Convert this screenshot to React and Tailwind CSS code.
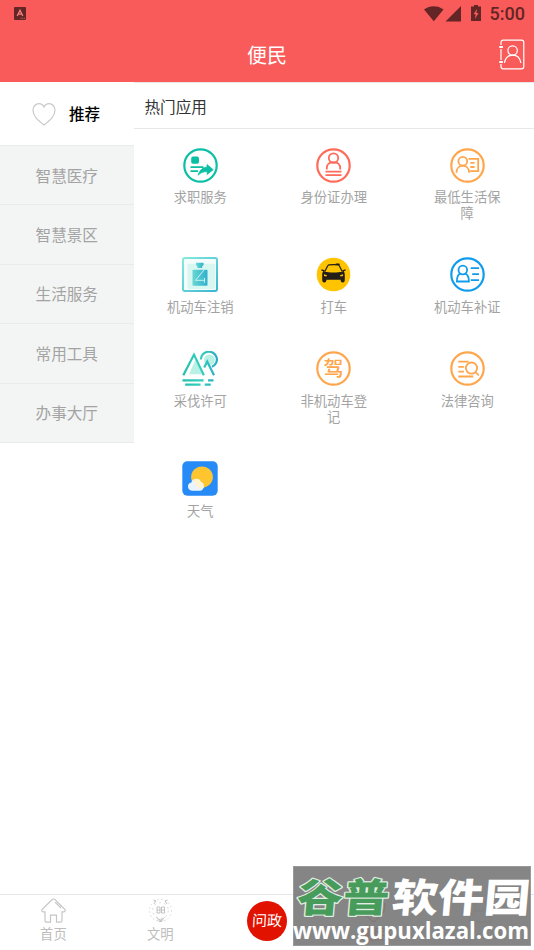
import { useState } from "react";

const categories = ["智慧医疗", "智慧景区", "生活服务", "常用工具", "办事大厅"];

const Ring = ({ color, children }) => (
    <svg viewBox="0 0 35 35" className="h-[35px] w-[35px]" fill="none" stroke={color} strokeWidth="1.8">
        <circle cx="17.5" cy="17.5" r="16.2" strokeWidth="2.2" />
        {children}
    </svg>
);

const JobIcon = () => (
    <Ring color="#0bbfa5">
        <rect x="8.2" y="8.6" width="7.8" height="7.2" rx="1.8" fill="#0bbfa5" stroke="none" />
        <path d="M7.5 19.1h13M7.5 23.1h7.6" />
        <path d="M15 27.2c2-5.7 5.2-8 9-8V16.500l6.2 5.200-6 4.700v-2.800c-4 0-6 .8-9.200 3.600z" fill="#0bbfa5" stroke="#0bbfa5" strokeWidth=".8" />
    </Ring>
);

const IdCardIcon = () => (
    <Ring color="#ff6a5a">
        <circle cx="17.5" cy="10" r="4.7" />
        <path d="M10.8 21.4v-1.3c0-3.4 2.2-5.6 5-5.6h3.4c2.8 0 5 2.2 5 5.6v1.3" />
        <path d="M9.5 23.6h16M9.5 27.2h16" />
    </Ring>
);

const WelfareIcon = () => (
    <Ring color="#ffa64d">
        <circle cx="12.8" cy="13.3" r="4.4" />
        <path d="M6.5 24.8c0-4.6 2.800-7.100 6.300-7.100s6.300 2.500 6.300 7.100M18.5 10.8h9.7v12.4h-8M20.3 14.8h4.3M20.3 19h4.3" />
    </Ring>
);

const DeregisterIcon = () => (
    <svg viewBox="0 0 36 36" className="h-[35px] w-[36px]" preserveAspectRatio="none">
        <defs>
            <linearGradient id="frame" x1="0" y1="0" x2="1" y2="1">
                <stop offset="0" stopColor="#86eadb" />
                <stop offset="1" stopColor="#3cb5d2" />
            </linearGradient>
            <linearGradient id="can" x1="0" y1="0" x2="1" y2="0">
                <stop offset="0" stopColor="#68d8d2" />
                <stop offset="1" stopColor="#2fb0cf" />
            </linearGradient>
        </defs>
        <rect x="1" y="1" width="34" height="34" rx="2" fill="#f3fdfb" stroke="url(#frame)" strokeWidth="2" />
        <rect x="5.5" y="7" width="27.5" height="26" rx="1" fill="#d8f7f1" />
        <path d="M14 6h7.5v2.6l-1.3.6v2.2h-4.8V9.2L14 8.6z" fill="url(#can)" />
        <rect x="10.5" y="13" width="15" height="16.5" rx="1" fill="url(#can)" />
        <path d="M22.3 13L13.500 24h9M22.500 21.500v5" fill="none" stroke="#d8f7f1" strokeWidth=".9" />
    </svg>
);

const TaxiIcon = () => (
    <svg viewBox="0 0 35 35" className="h-[35px] w-[35px]">
        <circle cx="17.5" cy="17.5" r="16.8" fill="#ffc400" />
        <path d="M19.500 8V7q0-.6.6-.6h3q.6 0 .6.600V8z" fill="#231e18" />
        <path d="M8.800 14.500l2.800-5.600Q12 8 13 7.900q4.500-.5 9 0 1 .1 1.400 1l2.800 5.600" fill="none" stroke="#231e18" strokeWidth="1.200" />
        <path d="M5.500 12.300l3.300.9-.4 1.600c5 .9 13.200.9 18.200 0l-.4-1.600 3.300-.9.200 1.100-2 .8c.8 1 1.100 2.300 1.100 3.800v4.500c0 1.900-.5 3-2 3s-2.200-1-2.200-2.800H10.400c0 1.800-.7 2.800-2.200 2.800s-2-1.100-2-3V18c0-1.500.3-2.800 1.100-3.800l-2-.8z" fill="#231e18" />
        <path d="M8 17.200l3 1.100-.6 1.200-2.400-.5zM27 17.200l-3 1.100.6 1.200 2.400-.5z" fill="#ffc400" />
    </svg>
);

const ReissueIcon = () => (
    <Ring color="#109cec">
        <circle cx="12.8" cy="13" r="4.3" />
        <path d="M10.3 16.7c-2.3.9-3.4 3.4-3.4 7.8h12c0-4.4-1.200-6.900-3.600-7.800M20.700 11.100H29M22.200 17.100H29M20.700 23.100H29" />
    </Ring>
);

const LoggingIcon = () => (
    <svg viewBox="0 0 36 36" className="h-[35px] w-[36px]" preserveAspectRatio="none" fill="none" stroke="url(#forest)" strokeWidth="2.200">
        <defs>
            <linearGradient id="forest" gradientUnits="userSpaceOnUse" x1="0" y1="0" x2="36" y2="0">
                <stop offset="0" stopColor="#1ebfac" />
                <stop offset=".5" stopColor="#35cfbd" />
                <stop offset="1" stopColor="#2ba9c5" />
            </linearGradient>
        </defs>
        <path d="M7 24L13.5 9 20 24z" fill="#baf1e6" stroke="none" />
        <circle cx="27.5" cy="9" r="5.5" fill="#baf1e6" stroke="none" />
        <path d="M1.3 25L12 3.700 21.800 25M18.900 8.700a8 8 0 1 1 11 7.400M22.200 17l3-6.200L32 25" />
        <path d="M.5 30.250h21M26 30.200h5.500M3.200 34.650h15.300M22.700 34.600h6" />
    </svg>
);

const DriveIcon = () => (
    <Ring color="#ffa64d">
        <text x="17.5" y="24.500" textAnchor="middle" fontSize="20" fontWeight="500" fill="#ffa64d" stroke="none">驾</text>
    </Ring>
);

const LawIcon = () => (
    <Ring color="#ffa64d">
        <circle cx="21.5" cy="17.1" r="5.6" />
        <path d="M25.6 21l3.2 3.5M8.3 10.7h10.3M8.3 15.8h5.6M8.3 20.7h5.6M8.3 25.5h15" />
    </Ring>
);

const WeatherIcon = () => (
    <svg viewBox="0 0 36 36" className="h-[35px] w-[36px]" preserveAspectRatio="none">
        <rect x=".3" y=".3" width="35.4" height="35.4" rx="5" fill="#278bf7" />
        <circle cx="20" cy="16.5" r="10.9" fill="#ffc52f" />
        <path d="M10 30.500a4.300 4.300 0 0 1-.6-8.500c1-5 8.200-5 9.500-.4 4 .5 4 8.400-.6 8.900z" fill="#eaf4ff" />
        <path d="M11.300 20.300c2.400-3 6.500-2.200 7.600 1.300 3 .6 3.700 4.600 2 7-4.200-.2-8-3.600-9.600-8.300z" fill="#fff3d0" />
    </svg>
);

const apps = [
    { name: "求职服务", Icon: JobIcon },
    { name: "身份证办理", Icon: IdCardIcon },
    { name: "最低生活保障", Icon: WelfareIcon },
    { name: "机动车注销", Icon: DeregisterIcon },
    { name: "打车", Icon: TaxiIcon },
    { name: "机动车补证", Icon: ReissueIcon },
    { name: "采伐许可", Icon: LoggingIcon },
    { name: "非机动车登记", Icon: DriveIcon },
    { name: "法律咨询", Icon: LawIcon },
    { name: "天气", Icon: WeatherIcon },
];

const HeartIcon = ({ className, stroke }) => (
    <svg viewBox="0 0 24 24" className={className} fill="none" stroke={stroke} strokeWidth="1.2">
        <path d="M12 23C5.500 17.800 1 13.800 1 8.300 1 4.500 3.600 1.600 7 1.600c2.200 0 4 1.300 5 3.400 1-2.100 2.800-3.400 5-3.400 3.400 0 6 2.900 6 6.700 0 5.500-4.500 9.500-11 14.700z" />
    </svg>
);

const StatusBar = () => (
    <div className="flex h-[27px] items-center justify-between pr-[9px] pl-[14px] text-[#632525]">
        <svg viewBox="0 0 12 13" className="h-[13px] w-3">
            <rect width="12" height="13" rx="1" fill="#632525" />
            <path d="M3.200 9L6 3.200 8.800 9M4.300 7.200h3.400" fill="none" stroke="#f98080" strokeWidth="1.300" />
            <path d="M6.500 11.300h4.500" stroke="#f98080" strokeWidth=".7" strokeDasharray="1 .7" />
        </svg>
        <div className="flex items-center">
            <svg viewBox="0 0 58 18" className="mb-[2px] h-[18px] w-[58px]" fill="#632525">
                <path d="M0 5.500C5.500 1 14 1 19.500 5.500L9.800 17.300z" />
                <path d="M37 2v15.500H21.500z" />
                <path d="M47 2.500h3V1h4v1.500h3V17H47z" />
                <path d="M53.200 4.800l-3.700 5.500h2.200l-.8 4.700 3.700-6h-2.200z" fill="#f95b5a" />
            </svg>
            <span className="mt-px ml-[8px] font-[Roboto] text-[18px] leading-none font-medium">5:00</span>
        </div>
    </div>
);

const ContactIcon = () => (
    <svg viewBox="0 0 26 31" className="h-[31px] w-[26px]" fill="none" stroke="#fff" strokeWidth="1.200">
        <path d="M2 6V3.500C2 2 2.800 1.200 4.300 1.200h18.200c1.500 0 2.300.8 2.300 2.300v24c0 1.500-.8 2.300-2.300 2.300H4.300C2.800 29.800 2 29 2 27.500V25M2 10v11" />
        <path d="M.3 8h3.600M.3 23h3.600" strokeWidth="2" />
        <circle cx="13.600" cy="11.500" r="4.700" />
        <path d="M5.400 24c1-5 4-7.900 8.200-7.900s7.500 2.900 8.300 7.900" />
    </svg>
);

const HomeIcon = () => (
    <svg viewBox="0 0 25 25" className="h-[25px] w-[25px]" fill="none" stroke="#c6c6c6" strokeWidth="1.200">
        <path d="M12.500 1Q13.300 1 14 1.700L24 11.500q.7 1.700-.8 2.300H21v8.500q0 1.900-1.800 1.900h-3.700v-7h-6v7H5.800Q4 24.200 4 22.300v-8.500H1.800q-1.500-.6-.8-2.300L11 1.700Q11.700 1 12.500 1z" />
        <path d="M14.200 4.300l5.800 5.700" />
    </svg>
);

const CivilIcon = () => (
    <svg viewBox="0 0 25 25" className="h-[25px] w-[25px]" fill="none" stroke="#cfcfcf" strokeWidth=".8">
        <circle cx="12.500" cy="12.500" r="11" strokeDasharray="1.500 2.500" />
        <circle cx="12.500" cy="12.500" r="7.800" strokeDasharray="2 3" />
        <path d="M9 9h3v6H9zM13.500 9h3v6h-3zM9 12h3M13.500 12h3M5.500 2l2.500 1-2 3M19.500 2L17 3l2 3" stroke="#b5b5b5" />
        <path d="M8.500 19.500l4 3 4-3M9.500 22h6M11 23.500h3" stroke="#b5b5b5" />
    </svg>
);

const UserIcon = () => (
    <svg viewBox="0 0 25 25" className="h-[25px] w-[25px]" fill="none" stroke="#c6c6c6" strokeWidth="1.200">
        <circle cx="12.500" cy="7.500" r="6" />
        <path d="M9 12.500c-5 1-7.500 4.500-7.500 9.500 0 1.500.5 2 2 2h18c1.500 0 2-.5 2-2 0-5-2.500-8.500-7.500-9.500" />
    </svg>
);

const TabItem = ({ label, children }) => (
    <button className="flex flex-1 flex-col items-center pt-[3px] text-[13.300px] leading-[21px] text-[#bdbdbd]">
        {children}
        {label}
    </button>
);

const Watermark = () => (
    <div className="pointer-events-none absolute right-[3px] bottom-[4px] h-[80px] w-[238px] border border-[#999] bg-[#787878]/90">
        <svg viewBox="0 0 236 78" className="h-full w-full overflow-visible">
            <g fontSize="39.500" fontWeight="900" transform="translate(2 44.500) skewX(-5)" strokeLinejoin="round">
                <text textLength="92" lengthAdjust="spacingAndGlyphs" fill="#489c5b" stroke="#e2eee4" strokeWidth="2.400" paintOrder="stroke">谷普</text>
                <text x="95" textLength="138" lengthAdjust="spacingAndGlyphs" fill="#fff">软件园</text>
            </g>
            <text x="-1" y="72" textLength="236" lengthAdjust="spacingAndGlyphs" className="font-['Open_Sans']" fontSize="23.500" fontWeight="700" fill="#fff">www.gupuxlazal.com</text>
        </svg>
    </div>
);

const App = () => {
    const [active, setActive] = useState(-1);

    return (
        <div className="relative flex h-[950px] w-[534px] flex-col overflow-hidden bg-white font-['Noto_Sans_CJK_SC',sans-serif]">
            <header className="h-[82px] shrink-0 bg-[#f95b5a]">
                <StatusBar />
                <div className="grid h-[54px] grid-cols-3 items-center pr-[9px] pl-[9px]">
                    <span />
                    <h1 className="pt-px text-center text-[20px] text-white">便民</h1>
                    <button className="justify-self-end"><ContactIcon /></button>
                </div>
            </header>
            <main className="flex flex-1">
                <aside className="w-[133.500px] shrink-0">
                    <button onClick={() => setActive(-1)} className="flex h-[63px] w-full items-center pl-[32px] text-[15.600px] font-medium text-black">
                        <HeartIcon className="h-[24px] w-[24px]" stroke="#c9c9c9" />
                        <span className="ml-[13px]">推荐</span>
                    </button>
                    {categories.map((name, i) => (
                        <button key={name} onClick={() => setActive(i)} className={`${active === i ? "bg-white text-black" : "bg-[#f3f5f4] text-[#a3a3a3]"} flex h-[59.400px] w-full items-center justify-center border-t border-[#e9ebea] text-[15.600px] last:h-[60.400px] last:border-b`}>
                            {name}
                        </button>
                    ))}
                </aside>
                <section className="flex-1">
                    <h2 className="flex h-[47px] items-center border-t border-b border-[#e8e8e8] pt-[2px] pl-[11px] text-[15.600px] text-[#333]">热门应用</h2>
                    <div className="grid grid-cols-3">
                        {apps.map(({ name, Icon }) => (
                            <button key={name} className="flex flex-col items-center pt-[18.500px] pb-[18.400px]">
                                <Icon />
                                <span className="mt-[6.500px] w-[70px] text-[13.300px] leading-[15.700px] text-[#a3a3a3]">{name}</span>
                            </button>
                        ))}
                    </div>
                </section>
            </main>
            <nav className="flex h-[56px] shrink-0 border-t border-[#e6e6e6]">
                <TabItem label="首页"><HomeIcon /></TabItem>
                <TabItem label="文明"><CivilIcon /></TabItem>
                <button className="flex flex-1 justify-center pt-[6px]">
                    <span className="flex h-10 w-10 items-center justify-center rounded-full bg-[#e11200]">
                        <span className="-skew-x-3 font-['Liberation_Serif','Noto_Sans_CJK_SC',serif] text-[15px] leading-none text-white">问政</span>
                    </span>
                </button>
                <button className="flex flex-1 flex-col items-center pt-[3px] text-[13.300px] leading-[21px] text-[#f95b5a]">
                    <HeartIcon className="h-[25px] w-[25px]" stroke="#f95b5a" />
                    便民
                </button>
                <TabItem><UserIcon /></TabItem>
            </nav>
            <Watermark />
        </div>
    );
};

export default App;
